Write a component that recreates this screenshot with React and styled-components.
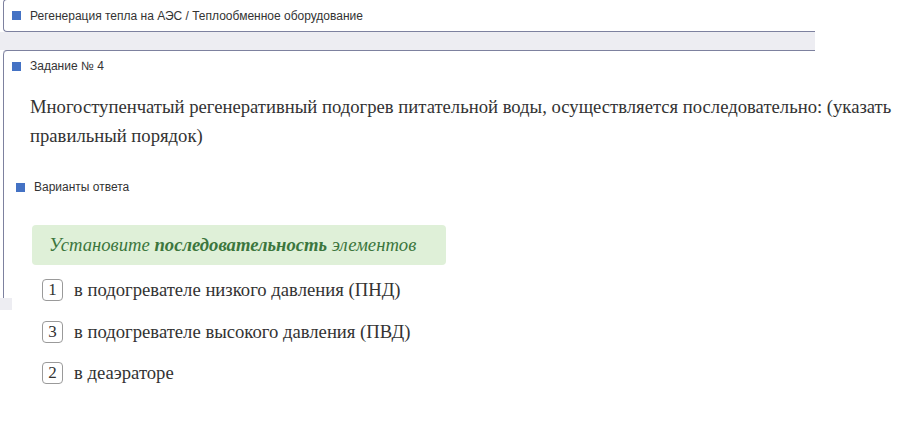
import React from 'react';
import styled, { createGlobalStyle } from 'styled-components';

const GlobalStyle = createGlobalStyle`
  html, body {
    margin: 0;
    padding: 0;
    background: #fff;
  }
  body {
    font-family: "Liberation Sans", Arial, sans-serif;
    color: #333;
  }
`

const Page = styled.div`
  width: 815px;
  display: flex;
  flex-direction: column;
  margin-top: -1px;
`

// grey strip between the breadcrumb and the task card
const Divider = styled.div`
  height: 18px;
  background: #ededf2;
`

const Panel = styled.div`
  margin-left: 3px;
  background: #fff;
  border: 1px solid #7d819f;
  border-right: none;
  border-radius: 4px 0 0 4px;
`

// task card: its left rule stops partway down, content keeps flowing below
const TaskPanel = styled.div`
  position: relative;
  margin-left: 3px;
  background: #fff;
  border-top: 1px solid #7d819f;
  border-top-left-radius: 4px;
  padding-bottom: 30px;

  &::before {
    content: '';
    position: absolute;
    left: 0;
    top: 0;
    width: 3px;
    height: 247px;
    border-left: 1px solid #7d819f;
    border-top-left-radius: 4px;
  }

  &::after {
    content: '';
    position: absolute;
    left: -3px;
    top: 247px;
    width: 12px;
    height: 12px;
    background: #ededf2;
  }
`

const PanelHead = styled.div`
  display: flex;
  align-items: center;
  gap: 9px;
  height: ${p => p.$h || 31}px;
  padding-left: ${p => p.$indent || 9}px;
  font-size: 12px;
  color: #333;
`

const Marker = styled.span`
  width: 9px;
  height: 9px;
  background: #4472c4;
  flex-shrink: 0;
`

const Question = styled.div`
  font-family: "Liberation Serif", "Times New Roman", serif;
  font-size: 18.67px;
  line-height: 29px;
  color: #333;
  padding: 11px 0 0 27px;
  width: 880px;
`

const Answers = styled.div`
  padding-top: 31px;
`

const Hint = styled.div`
  margin: 32px 0 0 29px;
  width: 414px;
  height: 40px;
  box-sizing: border-box;
  padding-left: 17px;
  display: flex;
  align-items: center;
  background: #dff0d8;
  border-radius: 4px;
  font-family: "Liberation Serif", "Times New Roman", serif;
  font-style: italic;
  font-size: 18.67px;
  color: #3c763d;
  white-space: pre;

  b {
    font-weight: bold;
  }
`

const List = styled.div`
  display: flex;
  flex-direction: column;
  gap: 19.5px;
  padding: 14px 0 0 39px;
`

const Row = styled.div`
  display: flex;
  align-items: center;
  gap: 11px;
  font-family: "Liberation Serif", "Times New Roman", serif;
  font-size: 18.67px;
  color: #333;
  height: 22px;
`

const Num = styled.span`
  width: 19px;
  height: 20px;
  border: 1px solid #9a9a9a;
  border-radius: 4px;
  display: flex;
  align-items: center;
  justify-content: center;
  font-size: 17px;
`

const items = [
  { n: 1, text: 'в подогревателе низкого давления (ПНД)' },
  { n: 3, text: 'в подогревателе высокого давления (ПВД)' },
  { n: 2, text: 'в деаэраторе' },
];

export default function App() {
  return (
    <>
      <GlobalStyle />
      <Page>
        <Panel>
          <PanelHead $h={31} $indent={8}>
            <Marker />
            Регенерация тепла на АЭС / Теплообменное оборудование
          </PanelHead>
        </Panel>
        <Divider />
        <TaskPanel>
          <PanelHead $h={30}>
            <Marker />
            Задание № 4
          </PanelHead>
          <Question>
            Многоступенчатый регенеративный подогрев питательной воды, осуществляется последовательно: (указать правильный порядок)
          </Question>
          <Answers>
            <PanelHead $h={12} $indent={13}>
              <Marker />
              Варианты ответа
            </PanelHead>
            <Hint>
              Установите <b>последовательность</b> элементов
            </Hint>
            <List>
              {items.map(item => (
                <Row key={item.n}>
                  <Num>{item.n}</Num>
                  {item.text}
                </Row>
              ))}
            </List>
          </Answers>
        </TaskPanel>
      </Page>
    </>
  );
}
